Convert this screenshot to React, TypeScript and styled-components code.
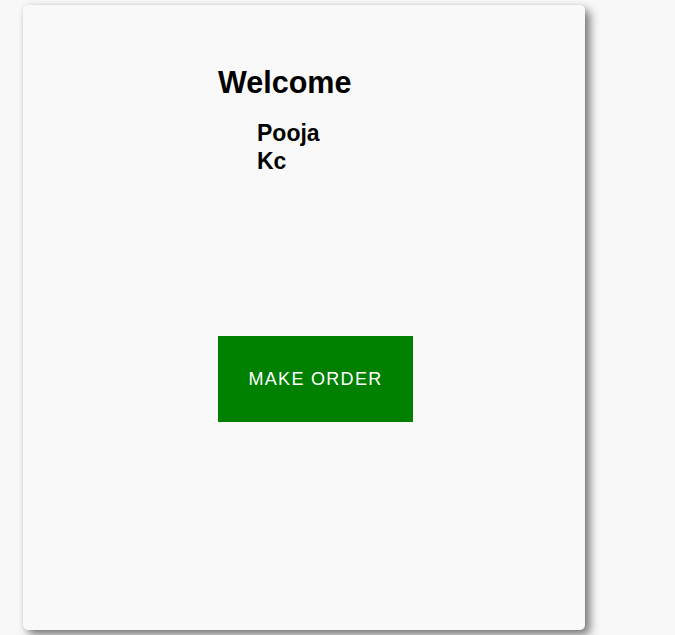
import React from "react";
import styled, { createGlobalStyle } from "styled-components";

const GlobalStyle = createGlobalStyle`
  html, body {
    margin: 0;
    padding: 0;
    background: #f8f8f8;
    font-family: "Liberation Sans", Arial, sans-serif;
  }
`;

const Page = styled.div`
  width: 675px;
  height: 635px;
  padding: 5px 0 0 23px;
  box-sizing: border-box;
  overflow: hidden;
`;

const Card = styled.div`
  width: 562px;
  height: 625px;
  box-sizing: border-box;
  background: #f9f9f9;
  border-radius: 5px;
  box-shadow: 5px 5px 10px rgba(0, 0, 0, 0.5), 0 0 4px rgba(0, 0, 0, 0.08);
  padding: 59px 0 0 195px;
  display: flex;
  flex-direction: column;
  align-items: flex-start;
`;

const Heading = styled.h1`
  margin: 0;
  font-size: 30.5px;
  line-height: 36px;
  font-weight: 700;
  color: #000;
`;

const UserName = styled.div`
  margin: 19px 0 0 39px;
  width: 70px;
  font-size: 23px;
  line-height: 28px;
  font-weight: 700;
  color: #000;
`;

const OrderButton = styled.button`
  margin-top: 161px;
  width: 195px;
  height: 86px;
  border: none;
  background: #008000;
  color: #fff;
  font-family: "Liberation Sans", Arial, sans-serif;
  font-size: 18px;
  letter-spacing: 1.3px;
  text-transform: uppercase;
  cursor: pointer;
`;

const App = () => {
  return (
    <>
      <GlobalStyle />
      <Page>
        <Card>
          <Heading>Welcome</Heading>
          <UserName>Pooja Kc</UserName>
          <OrderButton>Make order</OrderButton>
        </Card>
      </Page>
    </>
  );
};

export default App;
